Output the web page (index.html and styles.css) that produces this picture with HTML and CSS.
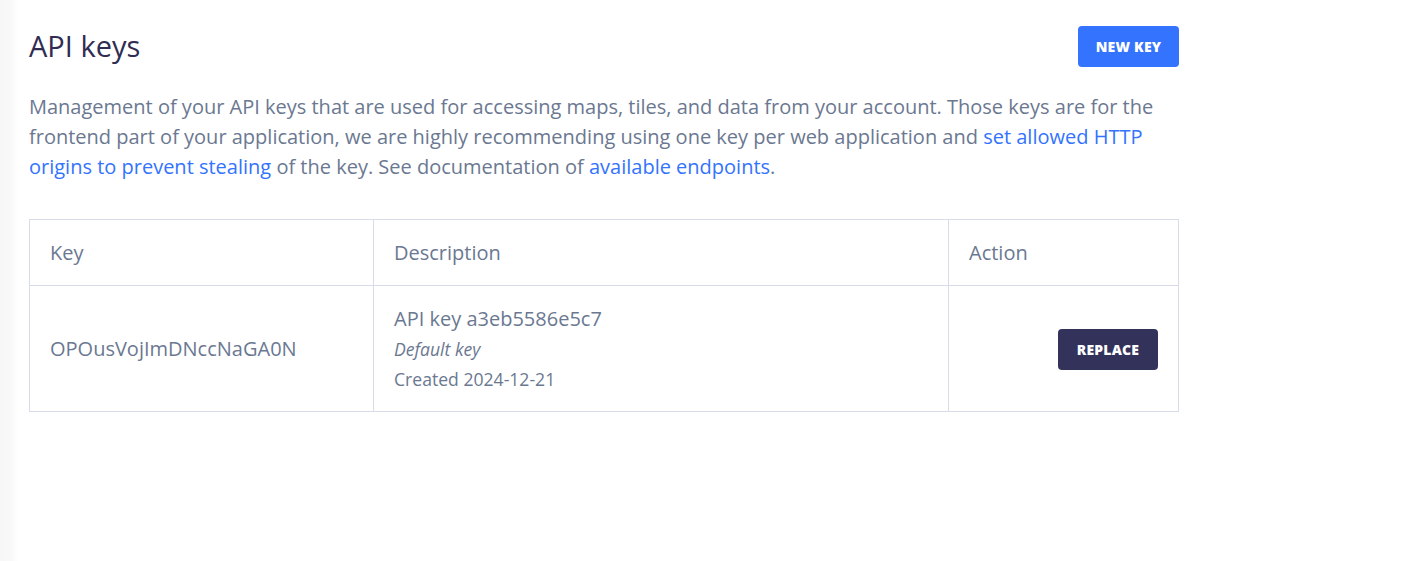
FILE: index.html
```html
<!DOCTYPE html>
<html lang="en">
<head>
<meta charset="utf-8">
<title>API keys</title>
<link rel="stylesheet" href="styles.css">
</head>
<body>
<main class="page">
  <header class="head">
    <h1 class="title">API keys</h1>
    <button class="btn btn-primary">NEW KEY</button>
  </header>
  <p class="intro">Management of your API keys that are used for accessing maps, tiles, and data from your account. Those keys are for the frontend part of your application, we are highly recommending using one key per web application and <a href="#">set allowed HTTP origins to prevent stealing</a> of the key. See documentation of <a href="#">available endpoints</a>.</p>
  <table class="keys">
    <thead>
      <tr>
        <th class="col-key">Key</th>
        <th class="col-desc">Description</th>
        <th class="col-action">Action</th>
      </tr>
    </thead>
    <tbody>
      <tr>
        <td>OPOusVojImDNccNaGA0N</td>
        <td>
          <div>API key a3eb5586e5c7</div>
          <div class="note">Default key</div>
          <div class="meta">Created 2024-12-21</div>
        </td>
        <td class="action"><button class="btn btn-dark">REPLACE</button></td>
      </tr>
    </tbody>
  </table>
</main>
</body>
</html>
```
FILE: styles.css
```css
html, body {
  margin: 0;
  height: 100%;
}
body {
  background: linear-gradient(to right, #f7f7f8 0, #f9f9fa 12px, #ffffff 18px);
  font-family: "Open Sans", "Liberation Sans", sans-serif;
  color: #6b7891;
}
.page {
  width: 1150px;
  padding: 26px 0 0 29px;
}
.head {
  display: flex;
  justify-content: space-between;
  align-items: flex-start;
}
.title {
  margin: 0;
  font-size: 29px;
  line-height: 40px;
  font-weight: 400;
  color: #2f2d52;
}
.btn {
  border: 0;
  border-radius: 4px;
  height: 41px;
  padding: 0;
  font-family: "Open Sans", "Liberation Sans", sans-serif;
  font-weight: 800;
  font-size: 14px;
  letter-spacing: 0.2px;
  color: #ffffff;
  cursor: pointer;
}
.btn-primary {
  background: #3373fd;
  width: 101px;
}
.btn-dark {
  background: #33325a;
  width: 100px;
}
.intro {
  margin: 25px 0 0;
  font-size: 20px;
  line-height: 30px;
}
.intro a {
  color: #3373fd;
  text-decoration: none;
}
.keys {
  margin-top: 37px;
  width: 1150px;
  border-collapse: collapse;
  font-size: 20px;
  line-height: 30px;
}
.keys th, .keys td {
  border: 1px solid #d7dcea;
  padding: 18px 20px 17px;
  text-align: left;
  font-weight: 400;
  vertical-align: middle;
}
.col-key { width: 303px; }
.col-desc { width: 534px; }
.note {
  font-style: italic;
  font-size: 17.6px;
}
.meta {
  font-size: 17.6px;
}
.keys td.action {
  text-align: right;
}
```
